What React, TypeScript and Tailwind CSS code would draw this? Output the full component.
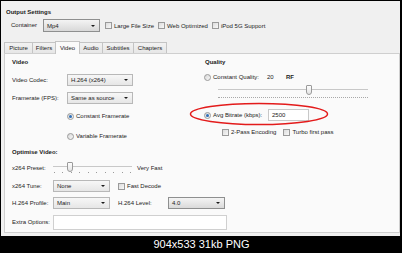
import React from "react";

/* =========================================================
   Small Win7-style controls
========================================================= */
function Combo({ value, w, dark }: { value: string; w: string; dark?: boolean }) {
  return (
    <div
      className={`${w} h-[12px] shrink-0 flex items-center justify-between border pl-[3px] pr-[4px] ${
        dark
          ? "border-[#8e8f8f] bg-linear-to-b from-[#f4f4f4] to-[#dadada]"
          : "border-[#b8b8b8] bg-linear-to-b from-[#f7f7f7] to-[#e6e6e6]"
      }`}
    >
      <span className="leading-none">{value}</span>
      <span className="w-0 h-0 border-l-[2px] border-r-[2px] border-t-[2px] border-l-transparent border-r-transparent border-t-[#1a1a1a]" />
    </div>
  );
}

function Check({ label }: { label: string }) {
  return (
    <div className="flex items-center gap-[2px]">
      <span className="w-[7px] h-[7px] shrink-0 border border-[#9a9a9a] bg-linear-to-br from-[#dcdcdc] to-[#f8f8f8]" />
      <span className="leading-none">{label}</span>
    </div>
  );
}

function Radio({ checked }: { checked?: boolean }) {
  return (
    <span className="w-[7px] h-[7px] shrink-0 rounded-full border border-[#9a9a9a] bg-linear-to-br from-[#d8d8d8] to-[#f8f8f8] flex items-center justify-center">
      {checked && <span className="w-[3px] h-[3px] rounded-full bg-[#2f6fb8]" />}
    </span>
  );
}

const tabs = [
  { name: "Picture", w: "w-[29px]" },
  { name: "Filters", w: "w-[24px]" },
  { name: "Video", w: "w-[25px]" },
  { name: "Audio", w: "w-[24px]" },
  { name: "Subtitles", w: "w-[32px]" },
  { name: "Chapters", w: "w-[34px]" },
];

export default function App() {
  return (
    <div className="relative w-[402px] h-[253px] bg-black pt-px pl-px overflow-hidden font-['Liberation_Sans',Arial,sans-serif]">
      {/* SCREEN */}
      <div className="w-[399px] h-[235px] bg-[#f0f0f0] text-[6px] text-[#222] flex flex-col">
        <div className="mt-[7px] h-[8px] leading-[8px] pl-[5px] font-bold">Output Settings</div>

        {/* container row */}
        <div className="mt-[3px] h-[13px] pl-[10px] flex items-center">
          <span className="w-[32px] shrink-0">Container</span>
          <div className="w-[57px] h-[13px] flex items-center justify-between border border-[#8e8f8f] bg-linear-to-b from-[#f4f4f4] to-[#d8d8d8] pl-[3px] pr-[4px]">
            <span className="leading-none">Mp4</span>
            <span className="w-0 h-0 border-l-[2px] border-r-[2px] border-t-[2px] border-l-transparent border-r-transparent border-t-[#1a1a1a]" />
          </div>
          <div className="ml-[5px] flex items-center gap-[4px]">
            <Check label="Large File Size" />
            <Check label="Web Optimized" />
            <Check label="iPod 5G Support" />
          </div>
        </div>

        {/* tabs */}
        <div className="mt-[9px] h-[12px] pl-[3px] flex items-end">
          {tabs.map((t, i) =>
            t.name === "Video" ? (
              <div
                key={t.name}
                className={`${t.w} h-[13px] -mb-px -ml-px relative z-10 border-t border-l border-r border-[#c4c4c4] bg-[#fafafa] flex items-center justify-center`}
              >
                {t.name}
              </div>
            ) : (
              <div
                key={t.name}
                className={`${t.w} h-[11px] ${i > 0 ? "-ml-px" : ""} border-t border-l border-r border-[#c4c4c4] bg-linear-to-b from-[#f2f2f2] to-[#e6e6e6] flex items-center justify-center`}
              >
                {t.name}
              </div>
            )
          )}
        </div>

        {/* PANEL */}
        <div className="ml-[3px] w-[396px] h-[180px] border border-[#cfcfcf] bg-[#fafafa] pl-[7px] flex items-start">
          {/* left column */}
          <div className="w-[192px] shrink-0 flex flex-col">
            <div className="mt-[4px] h-[8px] leading-[8px] font-bold">Video</div>
            <div className="mt-[8px] h-[12px] flex items-center">
              <span className="w-[55px] shrink-0">Video Codec:</span>
              <Combo value="H.264 (x264)" w="w-[66px]" />
            </div>
            <div className="mt-[6px] h-[12px] flex items-center">
              <span className="w-[55px] shrink-0">Framerate (FPS):</span>
              <Combo value="Same as source" w="w-[66px]" />
            </div>
            <div className="mt-[8px] h-[8px] pl-[55px] flex items-center gap-[2px]">
              <Radio checked />
              <span>Constant Framerate</span>
            </div>
            <div className="mt-[12px] h-[8px] pl-[55px] flex items-center gap-[2px]">
              <Radio />
              <span>Variable Framerate</span>
            </div>

            <div className="mt-[8px] h-[8px] leading-[8px] font-bold">Optimise Video:</div>
            <div className="mt-[6px] h-[12px] flex items-center">
              <span className="w-[41px] shrink-0">x264 Preset:</span>
              <div className="relative w-[79px] h-[12px] shrink-0">
                <div className="absolute left-0 right-0 top-[4px] h-px bg-[#c8c8c8]" />
                <div className="absolute left-[1px] right-[1px] top-[10px] flex justify-between">
                  {Array.from({ length: 10 }).map((_, i) => (
                    <span key={i} className="w-px h-px bg-[#9a9a9a]" />
                  ))}
                </div>
                <div className="absolute left-[14px] top-0 w-[6px] h-[10px] rounded-b-[3px] rounded-t-[1px] border border-[#9a9a9a] bg-linear-to-b from-[#fdfdfd] to-[#e4e4e4]" />
              </div>
              <span className="ml-[5px]">Very Fast</span>
            </div>
            <div className="mt-[6px] h-[12px] flex items-center">
              <span className="w-[41px] shrink-0">x264 Tune:</span>
              <Combo value="None" w="w-[57px]" />
              <div className="ml-[8px]">
                <Check label="Fast Decode" />
              </div>
            </div>
            <div className="mt-[5px] h-[12px] flex items-center">
              <span className="w-[41px] shrink-0">H.264 Profile:</span>
              <Combo value="Main" w="w-[57px]" />
              <span className="ml-[8px] w-[50px] shrink-0">H.264 Level:</span>
              <Combo value="4.0" w="w-[57px]" dark />
            </div>
            <div className="mt-[6px] h-[15px] flex items-center">
              <span className="w-[41px] shrink-0">Extra Options:</span>
              <div className="w-[174px] h-[15px] shrink-0 border border-[#d0d0d0] bg-white" />
            </div>
          </div>

          {/* right column */}
          <div className="flex flex-col w-[180px]">
            <div className="mt-[4px] h-[8px] leading-[8px] pl-[1px] font-bold">Quality</div>
            <div className="mt-[7px] h-[8px] flex items-center">
              <Radio />
              <span className="ml-[2px] w-[54px] shrink-0">Constant Quality:</span>
              <span className="w-[19px] shrink-0">20</span>
              <span className="font-bold">RF</span>
            </div>
            <div className="relative mt-[4px] ml-[14px] w-[150px] h-[13px]">
              <div className="absolute left-0 right-0 top-[4px] h-px bg-[#c8c8c8]" />
              <div className="absolute left-0 right-0 top-[12px] border-t border-dotted border-[#a8a8a8]" />
              <div className="absolute left-[88px] top-0 w-[6px] h-[10px] rounded-b-[3px] rounded-t-[1px] border border-[#9a9a9a] bg-linear-to-b from-[#fdfdfd] to-[#e4e4e4]" />
            </div>
            <div className="mt-[11px] h-[12px] flex items-center">
              <Radio checked />
              <span className="ml-[2px] w-[55px] shrink-0">Avg Bitrate (kbps):</span>
              <div className="w-[41px] h-[12px] shrink-0 border border-[#c8c8c8] bg-white pl-[3px] flex items-center">
                2500
              </div>
            </div>
            <div className="mt-[7px] h-[8px] pl-[18px] flex items-center gap-[7px]">
              <Check label="2-Pass Encoding" />
              <Check label="Turbo first pass" />
            </div>
          </div>
        </div>
      </div>

      {/* FOOTER */}
      <div className="h-[17px] leading-[17px] text-center text-white text-[11px]">904x533 31kb PNG</div>

      {/* red annotation ellipse */}
      <svg className="absolute left-[189px] top-[102px]" width="140" height="24" viewBox="0 0 140 24">
        <ellipse cx="70" cy="12" rx="68.5" ry="10.5" fill="none" stroke="#e31b1b" strokeWidth="1.5" />
      </svg>
    </div>
  );
}
